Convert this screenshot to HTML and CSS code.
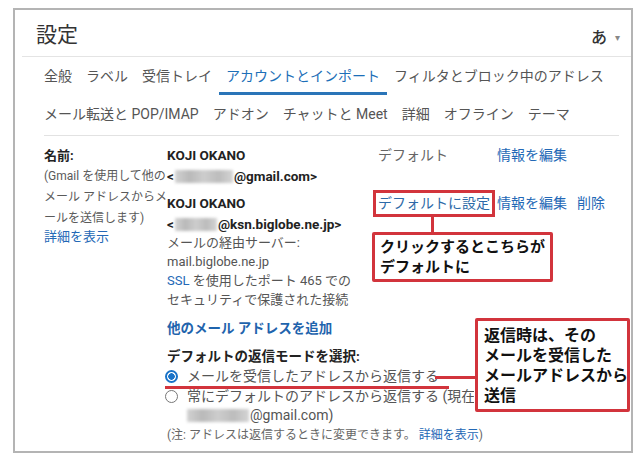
FILE: index.html
```html
<!DOCTYPE html>
<html lang="ja">
<head>
    <meta charset="UTF-8">
    <meta name="viewport" content="width=device-width, initial-scale=1.0">
    <title>設定 - アカウントとインポート</title>
    <link rel="stylesheet" href="styles.css">
</head>
<body>
    <div class="frame">
        <div class="head">
            <h1 class="title">設定</h1>
            <div class="ime">あ<span class="caret">▾</span></div>
        </div>

        <nav class="tabs">
            <div class="tab-row">
                <a class="tab">全般</a>
                <a class="tab">ラベル</a>
                <a class="tab">受信トレイ</a>
                <a class="tab active">アカウントとインポート</a>
                <a class="tab">フィルタとブロック中のアドレス</a>
            </div>
            <div class="tab-row">
                <a class="tab">メール転送と POP/IMAP</a>
                <a class="tab">アドオン</a>
                <a class="tab">チャットと Meet</a>
                <a class="tab">詳細</a>
                <a class="tab">オフライン</a>
                <a class="tab">テーマ</a>
            </div>
        </nav>

        <div class="content">
            <div class="label-col">
                <div class="label">名前:</div>
                <p class="hint">(Gmail を使用して他の<br>メール アドレスからメ<br>ールを送信します)</p>
                <a class="link hint-link">詳細を表示</a>
            </div>

            <div class="main-col">
                <div class="acct">
                    <div class="acct-info">
                        <div class="strong">KOJI OKANO</div>
                        <div class="strong">&lt;<span class="blur blur-1"></span>@gmail.com&gt;</div>
                    </div>
                    <div class="acct-actions">
                        <span class="status">デフォルト</span>
                        <a class="link">情報を編集</a>
                    </div>
                </div>

                <div class="acct second">
                    <div class="acct-info">
                        <div class="strong">KOJI OKANO</div>
                        <div class="strong">&lt;<span class="blur blur-2"></span>@ksn.biglobe.ne.jp&gt;</div>
                        <div class="server">
                            メールの経由サーバー:<br>
                            mail.biglobe.ne.jp<br>
                            <a class="link">SSL</a> を使用したポート 465 での<br>
                            セキュリティで保護された接続
                        </div>
                    </div>
                    <div class="acct-actions">
                        <span class="status"><a class="link marked">デフォルトに設定</a></span>
                        <a class="link">情報を編集</a>
                        <a class="link">削除</a>
                    </div>
                </div>

                <a class="add-link">他のメール アドレスを追加</a>

                <div class="reply">
                    <div class="reply-title">デフォルトの返信モードを選択:</div>
                    <label class="radio-row"><span class="radio checked"></span>メールを受信したアドレスから返信する</label>
                    <label class="radio-row cut"><span class="radio"></span><span class="cut-text">常にデフォルトのアドレスから返信する (現在のアドレス:</span></label>
                    <div class="radio-sub"><span class="blur blur-3"></span>@gmail.com)</div>
                    <div class="note">(注: アドレスは返信するときに変更できます。 <a class="link">詳細を表示</a>)</div>
                </div>
            </div>
        </div>

        <!-- annotations laid over the screenshot -->
        <div class="mark-line stem"></div>
        <div class="callout callout-default">クリックするとこちらが<br>デフォルトに</div>
        <div class="mark-line underline"></div>
        <div class="mark-line arm"></div>
        <div class="callout callout-reply">返信時は、その<br>メールを受信した<br>メールアドレスから<br>送信</div>
    </div>
</body>
</html>
```

FILE: styles.css
```css
body { margin: 0; background: #fff; font-family: Roboto, "Noto Sans CJK JP", sans-serif; color: #444; }
a { color: inherit; text-decoration: none; }
p { margin: 0; }

.frame { position: relative; width: 616px; height: 441px; margin: 8px 0 0 13px; border: 2px solid #b4b4b4; }

.head { display: flex; align-items: center; justify-content: space-between; height: 46px; margin-left: 7px; padding: 0 11px 0 14px; border-bottom: 1px solid #e4e4e4; }
.title { margin: 0; font-size: 21px; font-weight: 400; color: #333; }
.ime { margin-top: 5px; font-size: 16px; font-weight: 500; color: #333; }
.caret { margin-left: 8px; font-size: 10px; color: #888; vertical-align: 2px; }

.tabs { margin: 0 12px 0 29px; padding-bottom: 2px; border-bottom: 1px solid #e2e2e2; }
.tab-row { display: flex; height: 38px; margin-left: -7px; }
.tab { display: flex; align-items: center; padding: 0 7px; font-size: 14px; color: #555; border-bottom: 3px solid transparent; white-space: nowrap; }
.tab.active { color: #1d6fb8; border-bottom-color: #2a75b8; }

.content { display: flex; padding: 9px 0 0 29px; }
.label-col { width: 123px; flex: none; }
.label { font-size: 13px; font-weight: 700; color: #222; line-height: 21px; }
.hint { font-size: 12px; line-height: 21px; color: #5a5a5a; white-space: nowrap; }
.hint-link { display: block; font-size: 13px; line-height: 16px; }
.link { color: #2368b6; }

.main-col { flex: 1; min-width: 0; }
.acct { display: flex; }
.acct.second { margin-top: 6px; }
.acct-info { width: 211px; flex: none; }
.strong { font-size: 13.5px; font-weight: 700; color: #222; line-height: 21px; white-space: nowrap; }
.server { margin-top: -2px; font-size: 13px; line-height: 19px; color: #555; white-space: nowrap; }
.acct-actions { display: flex; align-items: flex-start; gap: 10px; font-size: 14px; line-height: 21px; white-space: nowrap; }
.status { width: 109px; color: #666; }
.marked { display: inline-block; line-height: 19px; margin: 1px 0 0 -1px; padding: 0 1px; color: #2d6aa8; outline: 3px solid #d2343c; outline-offset: 1px; }

.blur { display: inline-block; height: 13px; margin: 0 1px; vertical-align: -2px; filter: blur(1.5px);
    background: linear-gradient(90deg, #d2d2d2, #b9b9b9 25%, #cdcdcd 50%, #bcbcbc 75%, #d4d4d4); }
.blur-1 { width: 58px; }
.blur-2 { width: 42px; }
.blur-3 { width: 62px; margin-left: 0; }

.add-link { display: block; margin-top: 9px; font-size: 13.5px; font-weight: 700; line-height: 20px; color: #1f64ad; }
.reply { margin-top: 8px; white-space: nowrap; }
.reply-title { font-size: 13.5px; font-weight: 700; line-height: 20px; color: #222; }
.radio-row { display: flex; align-items: center; margin: 1px 0 0 -2px; font-size: 14px; line-height: 19.5px; color: #555; }
.radio-row + .radio-row { margin-top: 0; }
.cut { width: 309px; }
.cut-text { overflow: hidden; }
.radio { width: 11px; height: 11px; margin-right: 9px; border: 1px solid #777; border-radius: 50%; flex: none; }
.radio.checked { border: 2px solid #1a73c8; width: 9px; height: 9px; background: radial-gradient(circle, #1a73c8 0 3px, #fff 3.5px); }
.radio-sub { padding-left: 20px; font-size: 14px; line-height: 19.5px; color: #555; }
.note { font-size: 12px; line-height: 19.5px; color: #666; }

.mark-line { position: absolute; background: #d2343c; }
.stem { left: 416px; top: 207px; width: 3px; height: 16px; }
.underline { left: 150px; top: 376px; width: 284px; height: 3px; }
.arm { left: 420px; top: 366px; width: 42px; height: 3px; }

.callout { position: absolute; box-sizing: border-box; background: #fff; border: 3px solid #d2343c; border-radius: 2px; color: #111; font-weight: 700; line-height: 20px; white-space: nowrap; }
.callout-default { left: 357px; top: 222px; width: 181px; height: 50px; padding: 2px 0 0 5px; font-size: 15px; }
.callout-reply { left: 460px; top: 308px; width: 155px; height: 94px; padding: 5px 0 0 6px; font-size: 16px; }
```
